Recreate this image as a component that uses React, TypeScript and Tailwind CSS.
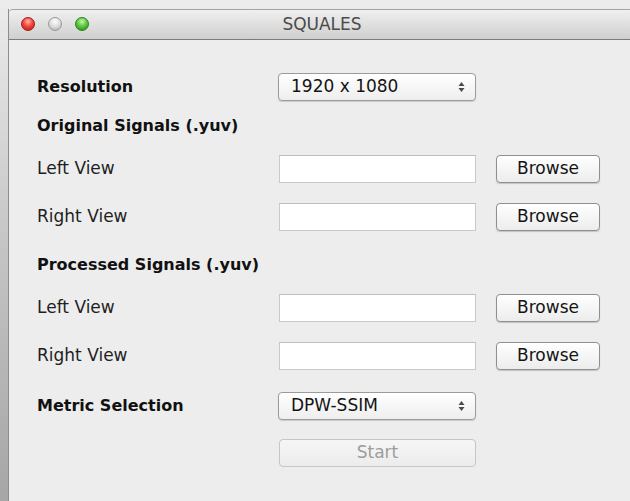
import { ReactNode } from 'react'

const font = "font-['DejaVu_Sans','Liberation_Sans',sans-serif]"

function TrafficLight({ tone }: { tone: 'red' | 'gray' | 'green' }) {
  const fill = {
    red: 'bg-[radial-gradient(circle_at_50%_30%,#ffb3ab_0%,#f2483d_45%,#b8160e_100%)] border-[#9c1f18]',
    gray: 'bg-[radial-gradient(circle_at_50%_30%,#ffffff_0%,#dcdcdc_50%,#a9a9a9_100%)] border-[#9a9a9a]',
    green: 'bg-[radial-gradient(circle_at_50%_30%,#c9f5b4_0%,#5ccb3c_45%,#1f8a14_100%)] border-[#2c7e1f]',
  }[tone]
  return <span className={`block w-[14px] h-[14px] rounded-full border ${fill}`} />
}

function SelectBox({ value }: { value: string }) {
  return (
    <div className="w-[198px] h-[28px] flex items-center justify-between pl-[12px] pr-[10px] rounded-[4px] border border-[#9b9b9b] bg-gradient-to-b from-[#ffffff] to-[#eeeeee] shadow-[0_1px_1px_rgba(0,0,0,0.15)]">
      <span className="text-[17px] text-[#141414]">{value}</span>
      <svg width="7" height="12" viewBox="0 0 7 12">
        <path d="M3.5 1 L6.5 5 L0.5 5 Z" fill="#4a4a4a" />
        <path d="M3.5 11 L6.5 7 L0.5 7 Z" fill="#4a4a4a" />
      </svg>
    </div>
  )
}

function TextField() {
  return <div className="w-[197px] h-[28px] bg-white border border-[#c9c9c9] border-t-[#bdbdbd]" />
}

function BrowseButton() {
  return (
    <button className="w-[104px] h-[28px] rounded-[4px] border border-[#8f8f8f] bg-gradient-to-b from-[#ffffff] to-[#ececec] shadow-[0_1px_1px_rgba(0,0,0,0.18)] text-[17px] text-[#141414] flex items-center justify-center">
      Browse
    </button>
  )
}

function Row({ label, bold, children, className }: { label?: string; bold?: boolean; children?: ReactNode; className: string }) {
  return (
    <div className={`flex items-center h-[28px] ${className}`}>
      <div className={`w-[241px] ${bold ? 'text-[16px] font-bold text-[#111111]' : 'text-[17px] text-[#1e1e1e]'}`}>{label}</div>
      {children}
    </div>
  )
}

function FileRow({ label, className }: { label: string; className: string }) {
  return (
    <Row label={label} className={className}>
      <div className="flex items-center gap-[20px] ml-[1px]">
        <TextField />
        <BrowseButton />
      </div>
    </Row>
  )
}

export default function App() {
  return (
    <div className={`w-[630px] h-[501px] overflow-hidden bg-gradient-to-b from-[#ececec] via-[#c4c4c4] to-[#a6a6a6] pl-[8px] pt-[9px] ${font}`}>
      <div className="w-[627px] h-[520px] bg-[#ededed] border-l border-[#8c8c8c] flex flex-col">
        {/* title bar */}
        <div className="h-[31px] shrink-0 relative flex items-center justify-center border-t border-[#a3a3a3] border-b border-b-[#7c7c7c] bg-gradient-to-b from-[#f0f0f0] to-[#cfcfcf] rounded-t-[4px]">
          <div className="absolute left-[12px] top-[7px] flex gap-[13px]">
            <TrafficLight tone="red" />
            <TrafficLight tone="gray" />
            <TrafficLight tone="green" />
          </div>
          <span className="text-[17px] text-[#4b4b4b]">SQUALES</span>
        </div>

        <div className="flex flex-col pl-[28px] pt-[33px]">
          <Row label="Resolution" bold className="">
            <SelectBox value="1920 x 1080" />
          </Row>
          <Row label="Original Signals (.yuv)" bold className="mt-[11px]" />
          <FileRow label="Left View" className="mt-[15px]" />
          <FileRow label="Right View" className="mt-[20px]" />
          <Row label="Processed Signals (.yuv)" bold className="mt-[20px]" />
          <FileRow label="Left View" className="mt-[15px]" />
          <FileRow label="Right View" className="mt-[20px]" />
          <Row label="Metric Selection" bold className="mt-[22px]">
            <SelectBox value="DPW-SSIM" />
          </Row>
          <Row className="mt-[19px]">
            <button
              disabled
              className="ml-[1px] w-[197px] h-[28px] rounded-[4px] border border-[#c6c6c6] bg-gradient-to-b from-[#f6f6f6] to-[#ececec] text-[17px] text-[#9c9c9c] flex items-center justify-center"
            >
              Start
            </button>
          </Row>
        </div>
      </div>
    </div>
  )
}
